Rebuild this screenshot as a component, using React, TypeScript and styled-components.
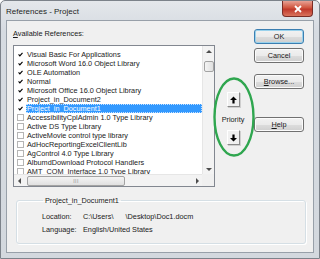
import styled, { createGlobalStyle } from "styled-components";

type Reference = {
  name: string;
  checked: boolean;
  selected?: boolean;
};

const references: Reference[] = [
  { name: "Visual Basic For Applications", checked: true },
  { name: "Microsoft Word 16.0 Object Library", checked: true },
  { name: "OLE Automation", checked: true },
  { name: "Normal", checked: true },
  { name: "Microsoft Office 16.0 Object Library", checked: true },
  { name: "Project_in_Document2", checked: true },
  { name: "Project_in_Document1", checked: true, selected: true },
  { name: "AccessibilityCplAdmin 1.0 Type Library", checked: false },
  { name: "Active DS Type Library", checked: false },
  { name: "ActiveMovie control type library", checked: false },
  { name: "AdHocReportingExcelClientLib", checked: false },
  { name: "AgControl 4.0 Type Library", checked: false },
  { name: "AlbumdDownload Protocol Handlers", checked: false },
  { name: "AMT_COM_Interface 1.0 Type Library", checked: false },
];

const GlobalStyle = createGlobalStyle`
  body {
    margin: 0;
    background: #ffffff;
    font-family: "Liberation Sans", Arial, sans-serif;
  }
`;

const Window = styled.div`
  position: relative;
  box-sizing: border-box;
  width: 320px;
  height: 259px;
  border: 1px solid #7c828a;
  border-radius: 5px 5px 0 0;
  background: linear-gradient(#e4e7eb, #d6dbe1 30px, #d3d8de);
  display: flex;
  flex-direction: column;
  overflow: hidden;
`;

const TitleBar = styled.div`
  height: 19px;
  display: flex;
  align-items: flex-start;
  justify-content: space-between;
  padding-left: 5px;
`;

const Title = styled.span`
  margin-top: 6px;
  font-size: 8px;
  line-height: 9px;
  color: #1e1e1e;
`;

const CloseButton = styled.div`
  width: 31px;
  height: 16px;
  margin-right: 6px;
  box-sizing: border-box;
  border: 1px solid #7a2d26;
  border-top: none;
  border-radius: 0 0 4px 4px;
  background: linear-gradient(#e8a194, #d0553f 45%, #c0392b 55%, #d9735c);
  display: flex;
  align-items: center;
  justify-content: center;
`;

const Client = styled.div`
  flex: 1;
  margin: 0 5px 5px;
  border: 1px solid #98a0a9;
  background: #f0f0f0;
  display: flex;
  flex-direction: column;
  font-size: 7.3px;
  color: #1a1a1a;
`;

const TopArea = styled.div`
  display: flex;
  padding: 8px 0 0 6px;
`;

const LeftColumn = styled.div`
  display: flex;
  flex-direction: column;
`;

const FieldLabel = styled.div`
  height: 9px;
  line-height: 9px;
  margin-bottom: 7px;
`;

const Key = styled.span`
  text-decoration: underline;
`;

const ListBox = styled.div`
  box-sizing: border-box;
  width: 202px;
  height: 142px;
  border: 1px solid #828790;
  background: #ffffff;
  display: grid;
  grid-template-columns: 1fr 12px;
  grid-template-rows: 1fr 12px;
`;

const Rows = styled.div`
  overflow: hidden;
  padding-top: 4px;
`;

const Row = styled.div`
  height: 9px;
  display: flex;
  align-items: center;
  padding-left: 3px;
  white-space: nowrap;
`;

const Check = styled.span<{ $checked: boolean }>`
  box-sizing: border-box;
  width: 7px;
  height: 7px;
  margin-right: 2px;
  border: 1px solid ${(p) => (p.$checked ? "#ffffff" : "#b5b5b5")};
  display: flex;
  align-items: center;
  justify-content: center;
  flex-shrink: 0;
`;

const ItemText = styled.span<{ $selected?: boolean }>`
  flex: 1;
  height: 9px;
  line-height: 9px;
  padding-left: 1px;
  background: ${(p) => (p.$selected ? "#3399ff" : "transparent")};
  color: ${(p) => (p.$selected ? "#ffffff" : "#1a1a1a")};
  outline: ${(p) => (p.$selected ? "1px dotted #c8e2ff" : "none")};
  outline-offset: -1px;
`;

const VScroll = styled.div`
  background: #f3f3f3;
  border-left: 1px solid #e6e6e6;
  display: flex;
  flex-direction: column;
  align-items: center;
`;

const HScroll = styled.div`
  background: #f3f3f3;
  border-top: 1px solid #e6e6e6;
  display: flex;
  align-items: center;
`;

const ScrollArrow = styled.div`
  width: 11px;
  height: 11px;
  display: flex;
  align-items: center;
  justify-content: center;
  flex-shrink: 0;
`;

const Thumb = styled.div<{ $horizontal?: boolean }>`
  box-sizing: border-box;
  width: ${(p) => (p.$horizontal ? "98px" : "10px")};
  height: ${(p) => (p.$horizontal ? "10px" : "11px")};
  margin: ${(p) => (p.$horizontal ? "0 0 0 2px" : "4px 0 0")};
  border: 1px solid #a3a3a3;
  border-radius: 2px;
  background: ${(p) =>
    p.$horizontal
      ? "linear-gradient(#f4f4f4, #e0e0e0)"
      : "linear-gradient(90deg, #f4f4f4, #e0e0e0)"};
  display: flex;
  align-items: center;
  justify-content: center;
  font-size: 5px;
  letter-spacing: 0.5px;
  color: #8a8a8a;
`;

const Spacer = styled.div`
  flex: 1;
`;

const Corner = styled.div`
  background: #f0f0f0;
`;

const PriorityColumn = styled.div`
  width: 39px;
  padding: 63px 3px 0 0;
  box-sizing: border-box;
  display: flex;
  flex-direction: column;
  align-items: center;
`;

const ArrowButton = styled.div`
  box-sizing: border-box;
  width: 13px;
  height: 15px;
  border-top: 1px solid #ffffff;
  border-left: 1px solid #ffffff;
  border-right: 1px solid #8a8a8a;
  border-bottom: 1px solid #8a8a8a;
  box-shadow: 1px 1px 0 #cfcfcf;
  background: #f0f0f0;
  display: flex;
  align-items: center;
  justify-content: center;
`;

const PriorityLabel = styled.div`
  height: 9px;
  line-height: 9px;
  margin: 8px 0 6px;
`;

const ButtonColumn = styled.div`
  width: 51px;
  display: flex;
  flex-direction: column;
`;

const Button = styled.div<{ $gap?: number; $default?: boolean }>`
  box-sizing: border-box;
  width: 50px;
  height: 15px;
  margin-top: ${(p) => p.$gap ?? 0}px;
  border: 1px solid ${(p) => (p.$default ? "#3c7fb1" : "#707070")};
  border-radius: 3px;
  box-shadow: inset 0 0 0 1px ${(p) => (p.$default ? "#9ad2ec" : "#fbfbfb")};
  background: linear-gradient(#f2f2f2, #ebebeb 50%, #dddddd 51%, #cfcfcf);
  display: flex;
  align-items: center;
  justify-content: center;
`;

const GroupBox = styled.fieldset`
  margin: 9px 7px 8px 9px;
  padding: 5px 0 0 25px;
  flex: 1;
  border: 1px solid #d5dfe5;
  border-radius: 3px;
  box-shadow: inset 1px 1px 0 #ffffff, 1px 1px 0 #ffffff;
  display: grid;
  grid-template-columns: 41px 1fr;
  grid-auto-rows: 13px;
  align-content: start;
  min-width: 0;
`;

const Legend = styled.legend`
  margin-left: 1px;
  padding: 0 2px;
  line-height: 9px;
  font-size: 7.3px;
`;

const InfoLabel = styled.span`
  line-height: 13px;
  color: #222222;
`;

const InfoValue = styled.span`
  line-height: 13px;
  white-space: pre;
`;

const Highlight = styled.svg`
  position: absolute;
  left: 211px;
  top: 75px;
  pointer-events: none;
`;

const CheckMark = () => (
  <svg width="7" height="7" viewBox="0 0 7 7">
    <path d="M0.8 3.4 L2.6 5.3 L6.3 1.2" fill="none" stroke="#000" strokeWidth="1.6" />
  </svg>
);

const Triangle = ({ dir }: { dir: "up" | "down" | "left" | "right" }) => {
  const points = {
    up: "1,5 4,2 7,5",
    down: "1,3 4,6 7,3",
    left: "5,1 2,4 5,7",
    right: "3,1 6,4 3,7",
  }[dir];
  return (
    <svg width="8" height="8" viewBox="0 0 8 8">
      <polygon points={points} fill="#4d4d4d" />
    </svg>
  );
};

const BoldArrow = ({ down }: { down?: boolean }) => (
  <svg width="7" height="8" viewBox="0 0 7 8" style={{ transform: down ? "rotate(180deg)" : undefined }}>
    <polygon points="3.5,0.5 7,4 4.6,4 4.6,7.5 2.4,7.5 2.4,4 0,4" fill="#000" />
  </svg>
);

export default function App() {
  return (
    <>
      <GlobalStyle />
      <Window>
        <TitleBar>
          <Title>References - Project</Title>
          <CloseButton>
            <svg width="10" height="8" viewBox="0 0 10 8">
              <path d="M2 1 L8 7 M8 1 L2 7" stroke="#ffffff" strokeWidth="1.8" />
            </svg>
          </CloseButton>
        </TitleBar>
        <Client>
          <TopArea>
            <LeftColumn>
              <FieldLabel>
                <Key>A</Key>vailable References:
              </FieldLabel>
              <ListBox>
                <Rows>
                  {references.map((ref) => (
                    <Row key={ref.name}>
                      <Check $checked={ref.checked}>{ref.checked && <CheckMark />}</Check>
                      <ItemText $selected={ref.selected}>{ref.name}</ItemText>
                    </Row>
                  ))}
                </Rows>
                <VScroll>
                  <ScrollArrow>
                    <Triangle dir="up" />
                  </ScrollArrow>
                  <Thumb />
                  <Spacer />
                  <ScrollArrow>
                    <Triangle dir="down" />
                  </ScrollArrow>
                </VScroll>
                <HScroll>
                  <ScrollArrow>
                    <Triangle dir="left" />
                  </ScrollArrow>
                  <Thumb $horizontal>III</Thumb>
                  <Spacer />
                  <ScrollArrow>
                    <Triangle dir="right" />
                  </ScrollArrow>
                </HScroll>
                <Corner />
              </ListBox>
            </LeftColumn>
            <PriorityColumn>
              <ArrowButton>
                <BoldArrow />
              </ArrowButton>
              <PriorityLabel>Priority</PriorityLabel>
              <ArrowButton>
                <BoldArrow down />
              </ArrowButton>
            </PriorityColumn>
            <ButtonColumn>
              <Button $default>OK</Button>
              <Button $gap={4}>Cancel</Button>
              <Button $gap={11}>
                <span>
                  <Key>B</Key>rowse...
                </span>
              </Button>
              <Button $gap={28}>
                <span>
                  <Key>H</Key>elp
                </span>
              </Button>
            </ButtonColumn>
          </TopArea>
          <GroupBox>
            <Legend>Project_in_Document1</Legend>
            <InfoLabel>Location:</InfoLabel>
            <InfoValue>{"C:\\Users\\      \\Desktop\\Doc1.docm"}</InfoValue>
            <InfoLabel>Language:</InfoLabel>
            <InfoValue>English/United States</InfoValue>
          </GroupBox>
        </Client>
        <Highlight width="44" height="82" viewBox="0 0 44 82">
          <ellipse cx="22" cy="41" rx="19.5" ry="38.5" fill="none" stroke="#2fa64f" strokeWidth="2.4" />
        </Highlight>
      </Window>
    </>
  );
}
